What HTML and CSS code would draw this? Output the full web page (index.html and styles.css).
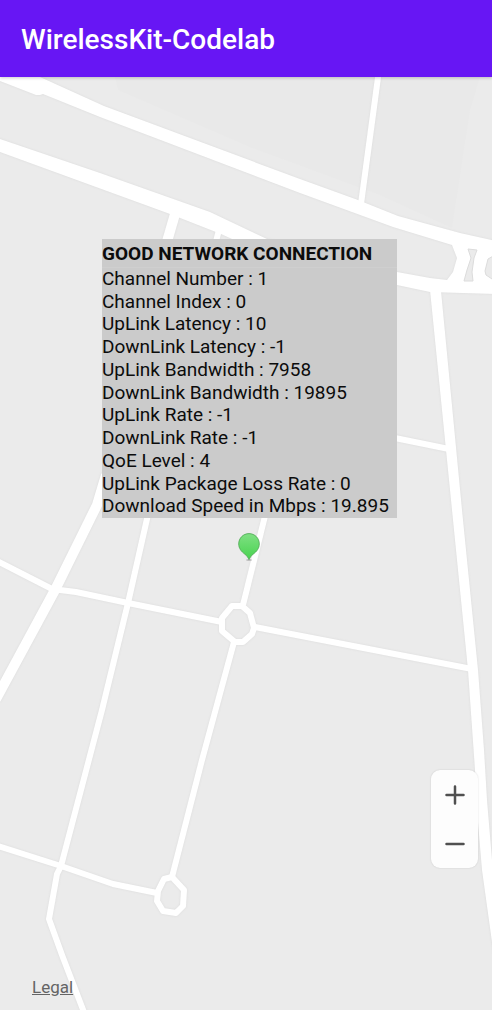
FILE: index.html
```html
<!DOCTYPE html>
<html lang="en">
<head>
<meta charset="utf-8">
<meta name="viewport" content="width=device-width, initial-scale=1">
<title>WirelessKit-Codelab</title>
<link rel="stylesheet" href="styles.css">
</head>
<body>
<header class="app-bar"><h1 class="app-title">WirelessKit-Codelab</h1></header>
<main class="map">
  <svg class="map-canvas" viewBox="0 77 492 933" preserveAspectRatio="xMidYMid slice" aria-hidden="true">
    <path class="district" d="M115 77L118 90L250 147L380 195L452 228L470 110L480 77Z"/>
    <g class="roads">
      <g class="area">
        <path d="M-5 60L40 77L104 106L300 179L358 200L398 216L460 233L496 241L496 294L430 292L397 285L232 239L221 234L170 214L0 152L-4 151L-4 138L0 139L100 173L210 212L267 239L397 272L430 278L447 280L453 272L457 258L452 245L393 227L300 193L100 117L43 94L40 95L36 95L0 81L-5 79Z"/>
        <path d="M430 290L441 291L462 510L478 670L484 750L487 800L492 860L498 900L498 980L492 942L482 870L478 822L475 770L468 670L452 510Z"/>
      </g>
      <g class="wide">
        <path d="M106 475L97 505L55 590L-4 699"/>
        <path d="M175 214L166 245"/>
      </g>
      <g class="narrow">
        <path d="M379 70L361 204"/>
        <path d="M219 230L215 245"/>
        <path d="M149 510L128 603L102 710L61 866L57 874L49 919L62 955L87 1020"/>
        <path d="M266 512L243 605"/>
        <path d="M-5 560L52 589L76 592L128 603L222 622"/>
        <path d="M255 627L472 669"/>
        <path d="M234 642L202 760L172 877"/>
        <path d="M-5 845L61 866L113 884L157 893"/>
        <path d="M390 437L449 449"/>
        <path d="M232 606L242 606L250 613L254 628L252 634L243 642L235 642L222 631L222 618Z"/>
        <path d="M172 877L184 890L183 906L176 913L163 911L157 901L158 891L164 879Z"/>
      </g>
    </g>
    <g class="island">
      <path d="M468 249L477 250L474 258L472 272L473 281L464 281L467 270L471 258Z"/>
      <path d="M495 255L488 259L485 271L486 275L495 281Z"/>
    </g>
  </svg>

  <section class="info-window">
    <h2 class="info-title">GOOD NETWORK CONNECTION</h2>
    <ul class="info-list">
      <li>Channel Number : 1</li>
      <li>Channel Index : 0</li>
      <li>UpLink Latency : 10</li>
      <li>DownLink Latency : -1</li>
      <li>UpLink Bandwidth : 7958</li>
      <li>DownLink Bandwidth : 19895</li>
      <li>UpLink Rate : -1</li>
      <li>DownLink Rate : -1</li>
      <li>QoE Level : 4</li>
      <li>UpLink Package Loss Rate : 0</li>
      <li>Download Speed in Mbps : 19.895</li>
    </ul>
  </section>

  <button class="marker" type="button" aria-label="Current location">
    <svg viewBox="0 0 24 30" width="24" height="30" aria-hidden="true">
      <defs>
        <linearGradient id="pin" x1="0" y1="0" x2="0" y2="1">
          <stop offset="0" stop-color="#7fe083"/>
          <stop offset="1" stop-color="#48d34f"/>
        </linearGradient>
      </defs>
      <ellipse cx="12" cy="28" rx="3" ry="1" fill="#bdbdbd"/>
      <path d="M12 1.6C6.200 1.600 1.700 6.200 1.700 12C1.700 16.200 4.200 19.500 8 22.300C10 23.800 11 25.500 12 27.600C13 25.500 14 23.800 16 22.300C19.800 19.500 22.300 16.200 22.300 12C22.300 6.200 17.800 1.600 12 1.600Z" fill="url(#pin)" stroke="#4ba650" stroke-width=".8"/>
    </svg>
  </button>

  <div class="zoom" role="group" aria-label="Zoom">
    <button class="zoom-button" type="button" aria-label="Zoom in">
      <svg viewBox="0 0 20 20" width="20" height="20" aria-hidden="true"><path d="M1.500 10H18.500M10 1.500V18.500"/></svg>
    </button>
    <button class="zoom-button" type="button" aria-label="Zoom out">
      <svg viewBox="0 0 20 20" width="20" height="20" aria-hidden="true"><path d="M1.500 10H18.500"/></svg>
    </button>
  </div>

  <a class="legal" href="#legal">Legal</a>
</main>
</body>
</html>
```
FILE: styles.css
```css
* {
  box-sizing: border-box;
}

body {
  margin: 0;
  min-height: 100vh;
  display: flex;
  flex-direction: column;
  font-family: Roboto, "Liberation Sans", sans-serif;
  background: #ebebeb;
}

.app-bar {
  position: relative;
  z-index: 1;
  padding: 24px 21px 21px;
  background: #6716f4;
  box-shadow: 0 1px 3px rgba(0, 0, 0, 0.2);
}

.app-title {
  margin: 0;
  color: #fff;
  font-size: 28px;
  font-weight: 500;
  line-height: 32px;
}

.map {
  position: relative;
  flex: 1;
  min-height: 560px;
  overflow: hidden;
}

.map-canvas {
  position: absolute;
  inset: 0;
  width: 100%;
  height: 100%;
}

.district {
  fill: #e9e9e9;
}

.roads {
  fill: none;
  stroke: #fff;
  stroke-linejoin: round;
  filter: drop-shadow(0 0 1px #dadada);
}

.area {
  fill: #fff;
  stroke: none;
}

.wide {
  stroke-width: 10px;
}

.narrow {
  stroke-width: 6px;
}

.island {
  fill: #ebebeb;
  stroke: #dcdcdc;
  stroke-width: 1px;
}

.info-window {
  position: absolute;
  top: 162px;
  left: 102px;
  min-width: 295px;
  min-height: 279px;
  display: flex;
  flex-direction: column;
  color: #0c0c0c;
  background: #cbcbcb;
}

.info-title {
  margin: 0;
  padding: 3px 0 1px;
  border-bottom: 1px solid #cfcfcf;
  font-size: 19px;
  font-weight: 700;
  line-height: 24px;
}

.info-list {
  flex: 1;
  margin: 0;
  padding: 0;
  display: grid;
  grid-auto-rows: 1fr;
  list-style: none;
  font-size: 19px;
  line-height: 22px;
  white-space: nowrap;
}

.marker {
  position: absolute;
  top: 455px;
  left: 237px;
  padding: 0;
  border: 0;
  background: none;
}

.marker svg {
  display: block;
}

.zoom {
  position: absolute;
  right: 14px;
  bottom: 142px;
  display: flex;
  flex-direction: column;
  border-radius: 9px;
  background: #fdfdfd;
  box-shadow: 0 0 2px rgba(0, 0, 0, 0.14);
}

.zoom-button {
  width: 47px;
  height: 49px;
  padding: 0;
  border: 0;
  display: grid;
  place-items: center;
  background: none;
}

.zoom-button svg {
  fill: none;
  stroke: #505050;
  stroke-width: 2.5px;
  stroke-linecap: round;
}

.legal {
  position: absolute;
  left: 32px;
  bottom: 13px;
  color: #646464;
  font-size: 17px;
  line-height: 20px;
}
```
